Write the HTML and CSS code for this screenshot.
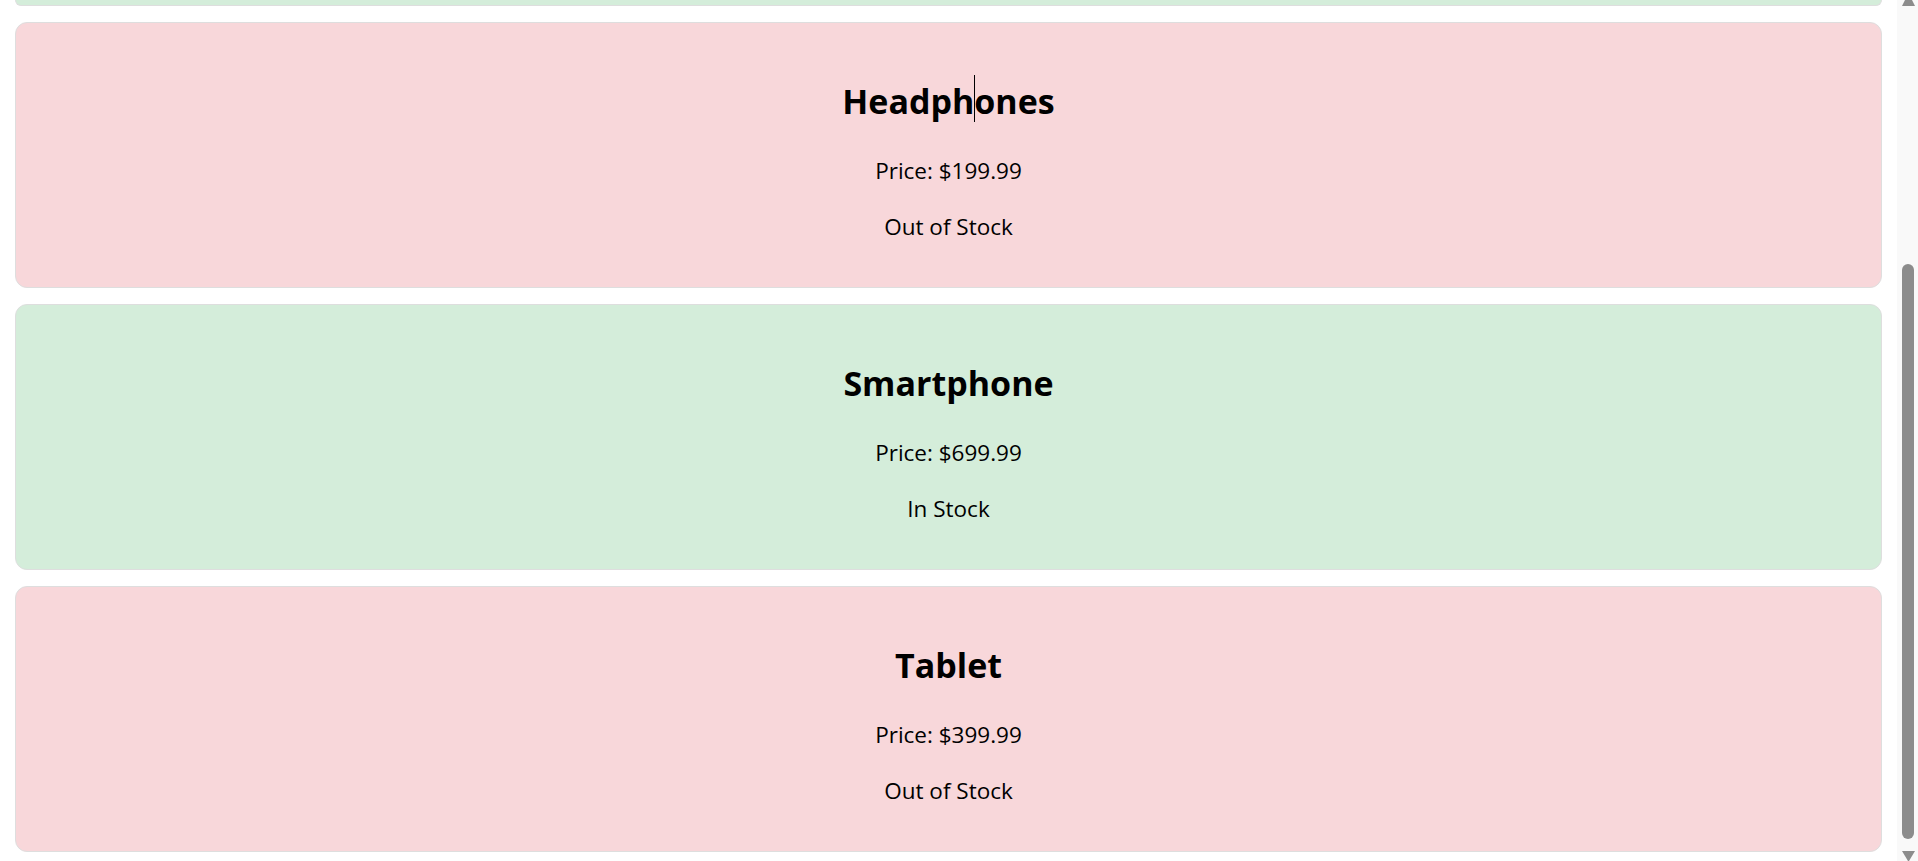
FILE: index.html
```html
<!DOCTYPE html>
<html lang="en">
<head>
<meta charset="utf-8">
<title>Products</title>
<link rel="stylesheet" href="styles.css">
</head>
<body>
<div class="page">
  <main class="list">
    <div class="card in-stock tail"></div>
    <section class="card out-stock">
      <h2 class="name">Headph<span class="caret"></span>ones</h2>
      <p class="line">Price: $199.99</p>
      <p class="line">Out of Stock</p>
    </section>
    <section class="card in-stock">
      <h2 class="name">Smartphone</h2>
      <p class="line">Price: $699.99</p>
      <p class="line">In Stock</p>
    </section>
    <section class="card out-stock">
      <h2 class="name">Tablet</h2>
      <p class="line">Price: $399.99</p>
      <p class="line">Out of Stock</p>
    </section>
  </main>
  <div class="scrollbar">
    <svg class="arrow-up" width="13" height="6" viewBox="0 0 13 6"><polygon points="3,0 10,0 13,6 0,6" fill="#8c8c8c"/></svg>
    <div class="thumb"></div>
    <svg class="arrow-down" width="13" height="10" viewBox="0 0 13 10"><polygon points="0,0 13,0 7,10 6,10" fill="#8c8c8c"/></svg>
  </div>
</div>
</body>
</html>
```
FILE: styles.css
```css
html, body {
  margin: 0;
  padding: 0;
  background: #ffffff;
}

body {
  font-family: "Open Sans", "Noto Sans", sans-serif;
  color: #000;
}

.page {
  display: flex;
  height: 861px;
  overflow: hidden;
}

.list {
  flex: 1;
  padding: 0 15px;
  display: flex;
  flex-direction: column;
  gap: 16px;
}

.card {
  border: 1px solid #dedede;
  border-radius: 12px;
  padding: 24px 24px 20px;
  text-align: center;
}

.tail {
  height: 5px;
  padding: 0;
  border-top: none;
  border-radius: 0 0 12px 12px;
  flex: none;
}

.in-stock {
  background: #d4edda;
}

.out-stock {
  background: #f8d7da;
}

.name {
  font-size: 34px;
  line-height: 48px;
  font-weight: 700;
  margin: 30px 0;
}

.line {
  font-size: 22.5px;
  line-height: 32px;
  margin: 24px 0;
}

.caret {
  display: inline-block;
  width: 1px;
  height: 47px;
  margin: -4px -1px 0 0;
  background: #000;
  vertical-align: -8px;
}

.scrollbar {
  width: 21px;
  flex: none;
  background: #f9f9f9;
  display: flex;
  flex-direction: column;
  align-items: center;
}

.arrow-up {
  display: block;
  margin-left: 1px;
}

.thumb {
  width: 12px;
  height: 575px;
  margin-top: 258px;
  margin-left: 1px;
  border-radius: 6px;
  background: #8c8c8c;
}

.arrow-down {
  display: block;
  margin-top: auto;
  margin-left: 1px;
}
```
